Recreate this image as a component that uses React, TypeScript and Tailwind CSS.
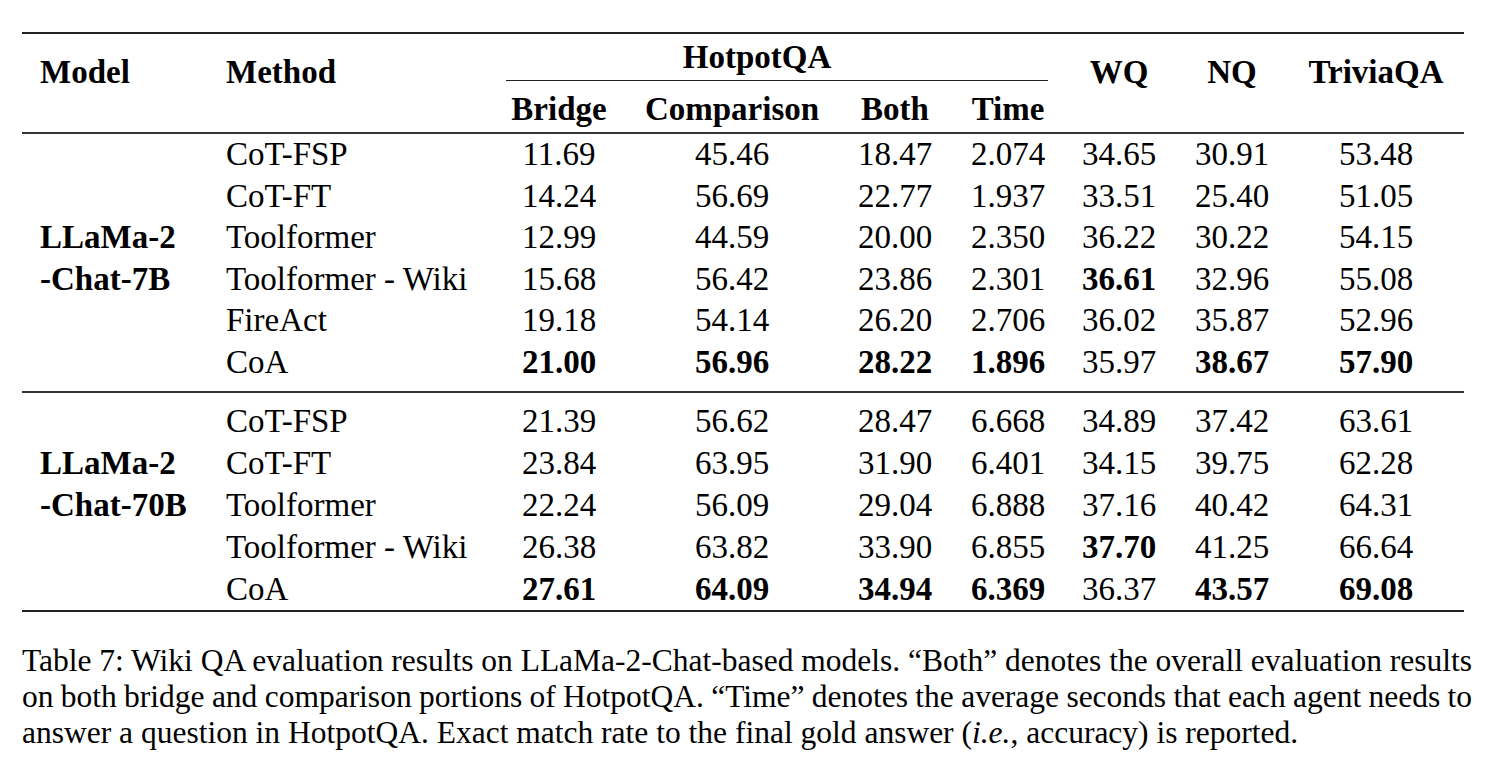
import React from "react";

type Row = {
  model?: string;
  method: string;
  values: string[];
  bold: number[];
};

const cols = "grid grid-cols-[186px_298px_106px_240px_86px_140px_82px_144px_160px]";

const group7B: Row[] = [
  { method: "CoT-FSP", values: ["11.69", "45.46", "18.47", "2.074", "34.65", "30.91", "53.48"], bold: [] },
  { method: "CoT-FT", values: ["14.24", "56.69", "22.77", "1.937", "33.51", "25.40", "51.05"], bold: [] },
  { model: "LLaMa-2", method: "Toolformer", values: ["12.99", "44.59", "20.00", "2.350", "36.22", "30.22", "54.15"], bold: [] },
  { model: "-Chat-7B", method: "Toolformer - Wiki", values: ["15.68", "56.42", "23.86", "2.301", "36.61", "32.96", "55.08"], bold: [4] },
  { method: "FireAct", values: ["19.18", "54.14", "26.20", "2.706", "36.02", "35.87", "52.96"], bold: [] },
  { method: "CoA", values: ["21.00", "56.96", "28.22", "1.896", "35.97", "38.67", "57.90"], bold: [0, 1, 2, 3, 5, 6] },
];

const group70B: Row[] = [
  { method: "CoT-FSP", values: ["21.39", "56.62", "28.47", "6.668", "34.89", "37.42", "63.61"], bold: [] },
  { model: "LLaMa-2", method: "CoT-FT", values: ["23.84", "63.95", "31.90", "6.401", "34.15", "39.75", "62.28"], bold: [] },
  { model: "-Chat-70B", method: "Toolformer", values: ["22.24", "56.09", "29.04", "6.888", "37.16", "40.42", "64.31"], bold: [] },
  { method: "Toolformer - Wiki", values: ["26.38", "63.82", "33.90", "6.855", "37.70", "41.25", "66.64"], bold: [4] },
  { method: "CoA", values: ["27.61", "64.09", "34.94", "6.369", "36.37", "43.57", "69.08"], bold: [0, 1, 2, 3, 5, 6] },
];

const DataRow = ({ row, lh }: { row: Row; lh: string }) => (
  <div className={`${cols} ${lh}`}>
    <div className="pl-[18px] font-bold whitespace-nowrap">{row.model}</div>
    <div className="pl-[18px] whitespace-nowrap">{row.method}</div>
    {row.values.map((v, i) => (
      <div
        key={i}
        className={`text-center ${i === 6 ? "pr-[16px]" : ""} ${row.bold.includes(i) ? "font-bold" : ""}`}
      >
        {v}
      </div>
    ))}
  </div>
);

const Rule = ({ cls }: { cls: string }) => <div className={`w-full ${cls}`} />;

export default function App() {
  return (
    <div className="w-[1505px] h-[774px] overflow-hidden bg-white text-black font-['Liberation_Serif','Times_New_Roman',serif]">
      <div className="ml-[22px] pt-[32px] w-[1442px] text-[33px]">
        <Rule cls="h-[2px] bg-[#222]" />

        {/* header */}
        <div className={`${cols} font-bold leading-[40px]`}>
          <div className="row-span-3 pl-[18px] pt-[18px]">Model</div>
          <div className="row-span-3 pl-[18px] pt-[18px]">Method</div>
          <div className="col-span-4 pt-[3px] pb-[3px] pr-[70px] text-center">HotpotQA</div>
          <div className="row-span-3 pt-[18px] text-center">WQ</div>
          <div className="row-span-3 pt-[18px] text-center">NQ</div>
          <div className="row-span-3 pt-[18px] pr-[16px] text-center">TriviaQA</div>
          <div className="col-span-4 mr-[30px] h-px bg-[#222]" />
          <div className="pt-[8px] pb-[3px] text-center">Bridge</div>
          <div className="pt-[8px] pb-[3px] text-center">Comparison</div>
          <div className="pt-[8px] pb-[3px] text-center">Both</div>
          <div className="pt-[8px] pb-[3px] text-center">Time</div>
        </div>

        <Rule cls="h-[2px] bg-[#333]" />
        <div className="pb-[8px]">
          {group7B.map((r, i) => (
            <DataRow key={i} row={r} lh="leading-[41.5px]" />
          ))}
        </div>
        <Rule cls="h-[2px] bg-[#333]" />
        <div className="pt-[7px]">
          {group70B.map((r, i) => (
            <DataRow key={i} row={r} lh="leading-[42px]" />
          ))}
        </div>
        <Rule cls="h-[2px] bg-[#222]" />
      </div>

      {/* caption */}
      <div className="ml-[22px] mt-[31px] w-[1450px] text-[31.5px] leading-[36px]">
        <div className="text-justify [text-align-last:justify] [word-spacing:-1px] whitespace-nowrap">
          Table 7: Wiki QA evaluation results on LLaMa-2-Chat-based models. “Both” denotes the overall evaluation results
        </div>
        <div className="text-justify [text-align-last:justify] [word-spacing:-1px] whitespace-nowrap">
          on both bridge and comparison portions of HotpotQA. “Time” denotes the average seconds that each agent needs to
        </div>
        <div className="whitespace-nowrap">
          answer a question in HotpotQA. Exact match rate to the final gold answer (<i>i.e.</i>, accuracy) is reported.
        </div>
      </div>
    </div>
  );
}
